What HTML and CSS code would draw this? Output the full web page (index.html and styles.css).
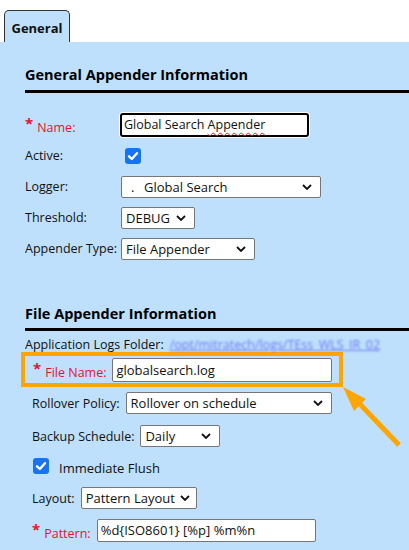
FILE: index.html
```html
<!DOCTYPE html>
<html>
<head>
<meta charset="utf-8">
<link rel="stylesheet" href="styles.css">
</head>
<body>
<div class="tabs"><div class="tab">General</div></div>
<div class="panel">
  <h2 class="section-title first">General Appender Information</h2>
  <div class="grid">
    <div class="label req"><span class="star">*</span>Name:</div>
    <div class="ctl"><div class="input focused name-input"><span>Global Search <span class="typo">Appender</span></span></div></div>

    <div class="label">Active:</div>
    <div class="ctl"><span class="checkbox"><svg viewBox="0 0 16 16" width="16" height="16"><path d="M4 8.3 L6.8 11 L12 5.2" fill="none" stroke="#fff" stroke-width="2.4" stroke-linecap="round" stroke-linejoin="round"/></svg></span></div>

    <div class="label">Logger:</div>
    <div class="ctl"><div class="select w-logger"><span class="sel-text"><span class="dot">.</span>Global Search</span><svg class="chev" viewBox="0 0 10 6" width="10" height="6"><path d="M1 1 L5 5 L9 1" fill="none" stroke="#111" stroke-width="1.8"/></svg></div></div>

    <div class="label">Threshold:</div>
    <div class="ctl"><div class="select w-threshold"><span class="sel-text">DEBUG</span><svg class="chev" viewBox="0 0 10 6" width="10" height="6"><path d="M1 1 L5 5 L9 1" fill="none" stroke="#111" stroke-width="1.8"/></svg></div></div>

    <div class="label">Appender Type:</div>
    <div class="ctl"><div class="select w-type"><span class="sel-text">File Appender</span><svg class="chev" viewBox="0 0 10 6" width="10" height="6"><path d="M1 1 L5 5 L9 1" fill="none" stroke="#111" stroke-width="1.8"/></svg></div></div>
  </div>

  <h2 class="section-title second">File Appender Information</h2>
  <div class="rows">
    <div class="row logs"><span class="label">Application Logs Folder:</span><span class="link">/opt/mitratech/logs/TEss_WLS_IR_02</span></div>
    <div class="highlight">
      <span class="label req"><span class="star">*</span>File Name:</span>
      <div class="input w-file">globalsearch.log</div>
    </div>
    <div class="row r-roll"><span class="label">Rollover Policy:</span><div class="select w-roll"><span class="sel-text">Rollover on schedule</span><svg class="chev" viewBox="0 0 10 6" width="10" height="6"><path d="M1 1 L5 5 L9 1" fill="none" stroke="#111" stroke-width="1.8"/></svg></div></div>
    <div class="row r-backup"><span class="label">Backup Schedule:</span><div class="select w-backup"><span class="sel-text">Daily</span><svg class="chev" viewBox="0 0 10 6" width="10" height="6"><path d="M1 1 L5 5 L9 1" fill="none" stroke="#111" stroke-width="1.8"/></svg></div></div>
    <div class="row r-flush"><span class="checkbox"><svg viewBox="0 0 16 16" width="16" height="16"><path d="M4 8.3 L6.8 11 L12 5.2" fill="none" stroke="#fff" stroke-width="2.4" stroke-linecap="round" stroke-linejoin="round"/></svg></span><span class="label flush-label">Immediate Flush</span></div>
    <div class="row r-layout"><span class="label">Layout:</span><div class="select w-layout"><span class="sel-text">Pattern Layout</span><svg class="chev" viewBox="0 0 10 6" width="10" height="6"><path d="M1 1 L5 5 L9 1" fill="none" stroke="#111" stroke-width="1.8"/></svg></div></div>
    <div class="row r-pattern"><span class="label req"><span class="star">*</span>Pattern:</span><div class="input w-pattern">%d{ISO8601} [%p] %m%n</div></div>
  </div>
</div>
<svg class="arrow" width="409" height="550" viewBox="0 0 409 550">
  <line x1="399" y1="445" x2="356" y2="400" stroke="#ffa500" stroke-width="5"/>
  <polygon points="343,387 366,399 354,411" fill="#ffa500"/>
</svg>
</body>
</html>
```
FILE: styles.css
```css
html, body {
  margin: 0;
  padding: 0;
  background: #fff;
  font-family: "Open Sans", "Liberation Sans", sans-serif;
  font-size: 12.5px;
  color: #111;
}
body { position: relative; width: 409px; height: 550px; overflow: hidden; }

.tabs { padding: 9px 0 0 4px; height: 33px; display: flex; align-items: flex-end; }
.tab {
  background: #bee0fd;
  border: 1px solid #333;
  border-bottom: none;
  border-radius: 5px 5px 0 0;
  height: 32px;
  width: 66px;
  box-sizing: border-box;
  display: flex;
  align-items: center;
  justify-content: center;
  font-weight: bold;
  font-size: 13px;
  padding-top: 2px;
}

.panel {
  background: #bee0fd;
  height: 508px;
  padding-left: 25px;
}

.section-title {
  margin: 0;
  font-size: 14.5px;
  font-weight: bold;
  line-height: 20px;
  border-bottom: 3px solid #000;
  color: #000;
}
.section-title.first { padding-top: 23px; padding-bottom: 5px; }
.section-title.second { margin-top: 40px; padding-bottom: 4px; }

.grid {
  display: grid;
  grid-template-columns: 96px auto;
  grid-auto-rows: 31px;
  align-items: center;
  margin-top: 16px;
}
.label { white-space: nowrap; }
.req { color: #e8112d; }
.star { color: #e8112d; font-size: 15px; vertical-align: 3px; margin-right: 4px; font-weight: bold; }

.ctl { display: flex; align-items: center; }

.input {
  background: #fff;
  border: 1px solid #767676;
  border-radius: 2px;
  box-sizing: border-box;
  height: 23px;
  display: flex;
  align-items: center;
  padding-left: 3px;
  white-space: nowrap;
  font-size: 13px;
}
.input.focused {
  border: 2px solid #000;
  border-radius: 3px;
  box-shadow: 0 0 0 1px #fff;
  height: 24px;
  padding-left: 2px;
}
.name-input { width: 189px; margin-left: -1px; font-size: 12.5px; }
.typo { text-decoration: underline wavy #e81123; text-decoration-thickness: 1px; text-underline-offset: 3px; }

.checkbox {
  width: 16px;
  height: 16px;
  background: #1873f0;
  border-radius: 3px;
  display: inline-block;
  margin-left: 4px;
}
.checkbox svg { display: block; }

.select {
  background: #fff;
  border: 1px solid #767676;
  border-radius: 2px;
  box-sizing: border-box;
  height: 22px;
  display: flex;
  align-items: center;
  justify-content: space-between;
  padding: 0 8px 0 4px;
  white-space: nowrap;
  font-size: 13px;
}
.chev { flex: none; }
.dot { display: inline-block; width: 13px; padding-left: 5px; }
.w-logger { width: 200px; }
.w-threshold { width: 74px; }
.w-type { width: 134px; }

.rows { padding-top: 5px; }
.row { display: flex; align-items: center; padding-left: 7px; }
.row .label { margin-right: 6px; }
.logs { padding-left: 0; height: 16px; }
.link { color: #6b78f0; filter: blur(1px); text-decoration: underline; white-space: nowrap; }

.highlight {
  margin-top: 0;
  margin-left: -4px;
  width: 322px;
  height: 35px;
  box-sizing: border-box;
  border: 4px solid #ffa500;
  display: flex;
  align-items: center;
  padding-left: 8px;
}
.highlight .label { margin-right: 6px; }
.w-file { width: 220px; height: 24px; }

.r-roll { margin-top: 5px; height: 22px; }
.w-roll { width: 206px; }
.r-backup { margin-top: 11px; height: 22px; }
.w-backup { width: 80px; }
.r-flush { margin-top: 10px; height: 18px; }
.r-flush .checkbox { margin-left: 1px; }
.flush-label { margin-left: 10px; font-size: 13px; padding-top: 3px; }
.r-layout { margin-top: 12px; height: 22px; }
.w-layout { width: 116px; padding-right: 6px; }
.r-pattern { margin-top: 9px; height: 24px; }
.w-pattern { width: 219px; }

.arrow { position: absolute; left: 0; top: 0; pointer-events: none; }
```
